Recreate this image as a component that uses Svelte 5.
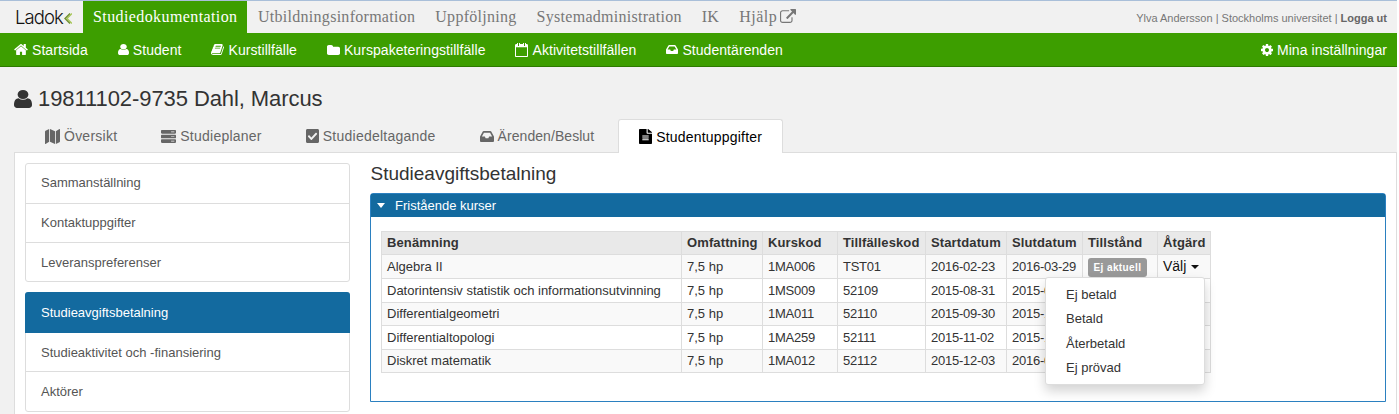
<script>
  const top = ['Utbildningsinformation', 'Uppföljning', 'Systemadministration', 'IK'];
  const bar = (y) => `M480 ${y + 128}H32c-17.673 0-32-14.327-32-32v-64c0-17.673 14.327-32 32-32h448c17.673 0 32 14.327 32 32v64c0 17.673-14.327 32-32 32zM344 ${y + 52}v24h112v-24z`;
  const icons = {
    home: ['64 256 1664 1280', 'M1472 992v480q0 26-19 45t-45 19h-384v-384h-256v384h-384q-26 0-45-19t-19-45v-480q0-1 .5-3t.5-3l575-474 575 474q1 2 1 6zm223-69l-62 74q-8 9-21 11h-3q-13 0-21-7l-692-577-692 577q-12 8-24 7-13-2-21-11l-62-74q-8-10-7-23.5t11-21.5l719-599q32-26 76-26t76 26l244 204v-195q0-14 9-23t23-9h192q14 0 23 9t9 23v408l219 182q10 8 11 21.5t-7 23.5z'],
    user: ['256 128 1280 1536', 'M1536 1399q0 109-62.5 187t-150.5 78h-854q-88 0-150.5-78t-62.5-187q0-85 8.5-160.5t31.5-151.5 58.5-130 94-88.5 134.5-34.5q131 128 313 128t313-128q76 0 134.5 34.5t94 88.5 58.5 130 31.5 151.5 8.5 160.5zm-256-887q0 159-112.5 271.5t-271.5 112.5-271.5-112.5-112.5-271.5 112.5-271.5 271.5-112.5 271.5 112.5 112.5 271.5z'],
    book: ['0 128 1664 1536', 'M1639 478q40 57 18 129l-275 906q-19 64-76.5 107.5t-122.5 43.5h-923q-77 0-148.5-53.5t-99.5-131.5q-24-67-2-127 0-4 3-27t4-37q1-8-3-21.5t-3-19.5q2-11 8-21t16.5-23.5 16.5-23.5q23-38 45-91.5t30-91.5q3-10 .5-30t-.5-28q3-11 17-28t17-23q21-36 42-92t25-90q1-9-2.5-32t.5-28q4-13 22-30.5t22-22.5q19-26 42.5-84.5t27.5-96.5q1-8-3-25.5t-2-26.5q2-8 9-18t18-23 17-21q8-12 16.5-30.5t15-35 16-36 19.5-32 26.5-23.5 36-11.5 47.5 5.5l-1 3q38-9 51-9h761q74 0 114 56t18 130l-274 906q-36 119-71.5 153.5t-128.5 34.5h-869q-27 0-38 15-11 16-1 43 24 70 144 70h923q29 0 56-15.5t35-41.5l300-987q7-22 5-57 38 15 59 43zm-1064 2q-4 13 2 22.5t20 9.5h608q13 0 25.5-9.5t16.5-22.5l21-64q4-13-2-22.5t-20-9.5h-608q-13 0-25.5 9.5t-16.5 22.5zm-83 256q-4 13 2 22.5t20 9.5h608q13 0 25.5-9.5t16.5-22.5l21-64q4-13-2-22.5t-20-9.5h-608q-13 0-25.5 9.5t-16.5 22.5z'],
    folder: ['64 128 1664 1408', 'M1728 608v704q0 92-66 158t-158 66h-1216q-92 0-158-66t-66-158v-960q0-92 66-158t158-66h320q92 0 158 66t66 158v32h672q92 0 158 66t66 158z'],
    calendar: ['64 128 1664 1664', 'M192 1664h1408v-1024h-1408v1024zm384-1216v-288q0-14-9-23t-23-9h-64q-14 0-23 9t-9 23v288q0 14 9 23t23 9h64q14 0 23-9t9-23zm768 0v-288q0-14-9-23t-23-9h-64q-14 0-23 9t-9 23v288q0 14 9 23t23 9h64q14 0 23-9t9-23zm384-64v1280q0 52-38 90t-90 38h-1408q-52 0-90-38t-38-90v-1280q0-52 38-90t90-38h128v-96q0-66 47-113t113-47h64q66 0 113 47t47 113v96h384v-96q0-66 47-113t113-47h64q66 0 113 47t47 113v96h128q52 0 90 38t38 90z'],
    inbox: ['0 64 576 384', 'M567.938 243.908L462.25 85.374A48.003 48.003 0 0 0 422.311 64H153.689a48 48 0 0 0-39.938 21.374L8.062 243.908A47.994 47.994 0 0 0 0 270.533V400c0 26.51 21.49 48 48 48h480c26.51 0 48-21.49 48-48V270.533a47.994 47.994 0 0 0-8.062-26.625zM162.252 128h251.497l85.333 128H376l-32 64H232l-32-64H76.918l85.334-128z'],
    cog: ['128 128 1536 1536', 'M1152 896q0-106-75-181t-181-75-181 75-75 181 75 181 181 75 181-75 75-181zm512-109v222q0 12-8 23t-20 13l-185 28q-19 54-39 91 35 50 107 138 10 12 10 25t-9 23q-27 37-99 108t-94 71q-12 0-26-9l-138-108q-44 23-91 38-16 136-29 186-7 28-36 28h-222q-14 0-24.5-8.5t-11.5-21.5l-28-184q-49-16-90-37l-141 107q-10 9-25 9-14 0-25-11-126-114-165-168-7-10-7-23 0-12 8-23 15-21 51-66.5t54-70.5q-27-50-41-99l-183-27q-13-2-21-12.5t-8-23.5v-222q0-12 8-23t19-13l186-28q14-46 39-92-40-57-107-138-10-12-10-24 0-10 9-23 26-36 98.5-107.5t94.5-71.5q13 0 26 10l138 107q44-23 91-38 16-136 29-186 7-28 36-28h222q14 0 24.5 8.5t11.5 21.5l28 184q49 16 90 37l142-107q9-9 24-9 13 0 25 10 129 119 165 170 7 8 7 22 0 12-8 23-15 21-51 66.5t-54 70.5q26 50 41 98l183 28q13 2 21 12.5t8 23.5z'],
    map: ['0 32 576 448', 'M0 117.66v346.32c0 11.32 11.43 19.06 21.94 14.86L160 416V32L20.12 87.95A32.006 32.006 0 0 0 0 117.66zM192 416l192 64V96L192 32v384zM554.06 33.16L416 96v384l139.88-55.95A31.996 31.996 0 0 0 576 394.34V48.02c0-11.32-11.43-19.06-21.94-14.86z'],
    server: ['0 32 512 448', bar(32) + bar(192) + bar(352)],
    check: ['0 32 448 448', 'M400 480H48c-26.51 0-48-21.49-48-48V80c0-26.51 21.49-48 48-48h352c26.51 0 48 21.49 48 48v352c0 26.51-21.49 48-48 48zm-204.686-98.059l184-184c6.248-6.248 6.248-16.379 0-22.627l-22.627-22.627c-6.248-6.248-16.379-6.249-22.628 0L184 302.745l-69.059-69.059c-6.248-6.248-16.379-6.248-22.628 0L69.686 256.314c-6.248 6.248-6.248 16.379 0 22.627l104 104c6.249 6.25 16.379 6.25 22.628.001z'],
    file: ['0 0 384 512', 'M224 136V0H24C10.7 0 0 10.7 0 24v464c0 13.3 10.7 24 24 24h336c13.3 0 24-10.7 24-24V160H248c-13.2 0-24-10.8-24-24zm64 236c0 6.6-5.4 12-12 12H108c-6.6 0-12-5.4-12-12v-8c0-6.6 5.4-12 12-12h168c6.6 0 12 5.4 12 12v8zm0-64c0 6.6-5.4 12-12 12H108c-6.6 0-12-5.4-12-12v-8c0-6.6 5.4-12 12-12h168c6.6 0 12 5.4 12 12v8zm0-72v8c0 6.6-5.4 12-12 12H108c-6.6 0-12-5.4-12-12v-8c0-6.6 5.4-12 12-12h168c6.6 0 12 5.4 12 12zm96-114.1v6.1H256V0h6.1c6.4 0 12.5 2.5 17 7l97.9 98c4.5 4.5 7 10.6 7 16.9z'],
    ext: ['0 0 1792 1536', 'M1408 928v320q0 119-84.5 203.5t-203.5 84.5h-832q-119 0-203.5-84.5t-84.5-203.5v-832q0-119 84.5-203.5t203.5-84.5h704q14 0 23 9t9 23v64q0 14-9 23t-23 9h-704q-66 0-113 47t-47 113v832q0 66 47 113t113 47h832q66 0 113-47t47-113v-320q0-14 9-23t23-9h64q14 0 23 9t9 23zm384-864v512q0 26-19 45t-45 19-45-19l-176-176-652 652q-10 10-23 10t-23-10l-114-114q-10-10-10-23t10-23l652-652-176-176q-19-19-19-45t19-45 45-19h512q26 0 45 19t19 45z']
  };
  const nav = [
    ['home', 'Startsida'], ['user', 'Student'], ['book', 'Kurstillfälle'],
    ['folder', 'Kurspaketeringstillfälle'], ['calendar', 'Aktivitetstillfällen'], ['inbox', 'Studentärenden']
  ];
  const tabs = [['map', 'Översikt'], ['server', 'Studieplaner'], ['check', 'Studiedeltagande'], ['inbox', 'Ärenden/Beslut'], ['file', 'Studentuppgifter']];
  const side1 = ['Sammanställning', 'Kontaktuppgifter', 'Leveranspreferenser'];
  const side2 = ['Studieaktivitet och -finansiering', 'Aktörer'];
  const cols = ['Benämning', 'Omfattning', 'Kurskod', 'Tillfälleskod', 'Startdatum', 'Slutdatum', 'Tillstånd', 'Åtgärd'];
  const rows = [
    ['Algebra II', '1MA006', 'TST01', '2016-02-23', '2016-03-29'],
    ['Datorintensiv statistik och informationsutvinning', '1MS009', '52109', '2015-08-31', '2015-09-29'],
    ['Differentialgeometri', '1MA011', '52110', '2015-09-30', '2015-11-01'],
    ['Differentialtopologi', '1MA259', '52111', '2015-11-02', '2015-12-02'],
    ['Diskret matematik', '1MA012', '52112', '2015-12-03', '2016-01-17']
  ];
  const menu = ['Ej betald', 'Betald', 'Återbetald', 'Ej prövad'];
</script>

{#snippet icon(name, cls)}
  <svg class="ic {cls} {cls}-{name}" viewBox={icons[name][0]} preserveAspectRatio="none" aria-hidden="true"><path d={icons[name][1]} /></svg>
{/snippet}

<div class="page">
  <header class="top">
    <div class="logo"><span class="logotext">Ladok</span><svg class="chev" viewBox="0 0 8 11"><path class="c2" d="M8 .5 3 5.5l5 5" /><path class="c1" d="M6 .5 1 5.5l5 5" /></svg></div>
    <a class="topitem active">Studiedokumentation</a>
    {#each top as t}<a class="topitem">{t}</a>{/each}
    <a class="topitem help">Hjälp{@render icon('ext', 'extic')}</a>
    <div class="user">Ylva Andersson | Stockholms universitet | <b>Logga ut</b></div>
  </header>

  <nav class="green">
    {#each nav as [ic, label]}
      <a class="navitem">{@render icon(ic, 'navic')}{label}</a>
    {/each}
    <a class="navitem settings">{@render icon('cog', 'navic')}Mina inställningar</a>
  </nav>

  <h1 class="person">{@render icon('user', 'personic')}19811102-9735 Dahl, Marcus</h1>

  <div class="tabs">
    {#each tabs as [ic, label], i}
      <a class="tab" class:on={i === 4}>{@render icon(ic, 'tabic')}{label}</a>
    {/each}
  </div>

  <div class="content">
    <aside class="side">
      <div class="group">
        {#each side1 as s}<a class="li">{s}</a>{/each}
      </div>
      <div class="group second">
        <a class="li current">Studieavgiftsbetalning</a>
        {#each side2 as s}<a class="li">{s}</a>{/each}
      </div>
    </aside>

    <main class="main">
      <h2 class="title">Studieavgiftsbetalning</h2>
      <section class="panel">
        <div class="phead"><span class="pcaret"></span>Fristående kurser</div>
        <div class="pbody">
          <table>
            <thead><tr>{#each cols as c}<th>{c}</th>{/each}</tr></thead>
            <tbody>
              {#each rows as r, i}
                <tr class:odd={i % 2 === 0} class:short={i === 2 || i === 4}>
                  <td>{r[0]}</td><td>7,5 hp</td><td class="num">{r[1]}</td><td class="num">{r[2]}</td><td class="num">{r[3]}</td><td class="num">{r[4]}</td>
                  <td>{#if i === 0}<span class="badge">Ej aktuell</span>{/if}</td>
                  <td class="act">{#if i === 0}Välj <span class="caret"></span>{/if}</td>
                </tr>
              {/each}
            </tbody>
          </table>
          <ul class="menu">
            {#each menu as m}<li>{m}</li>{/each}
          </ul>
        </div>
      </section>
    </main>
  </div>
</div>

<style>
  :global(body) { margin: 0; background: #fff; }
  .page {
    width: 1397px; height: 414px; overflow: hidden; background: #f1f1f1;
    font-family: "Liberation Sans", Arial, sans-serif; color: #333; font-size: 13px;
    border-top: 1px solid #a9bfd9; box-sizing: border-box;
  }
  .ic { fill: currentColor; display: block; flex: none; }

  .top { display: flex; height: 32px; align-items: stretch; }
  .logo { width: 83px; flex: none; display: flex; align-items: center; padding-left: 15px; box-sizing: border-box; }
  .logotext { font-family: Inter, sans-serif; font-weight: 300; font-size: 18.5px; letter-spacing: -0.9px; color: #111; line-height: 1; margin-top: 1px; }
  .chev { width: 8px; height: 11px; fill: none; stroke-width: 1.4; margin-left: 1px; margin-top: 3px; }
  .c1 { stroke: #6f8f2f; }
  .c2 { stroke: #a9c85a; }
  .topitem {
    font-family: "Liberation Serif", serif; font-size: 16px; color: #777; padding: 0 10px;
    display: flex; align-items: center; letter-spacing: 0.28px;
  }
  .topitem.active { background: #3d9e00; color: #fff; width: 164px; box-sizing: border-box; padding: 0 0 0 10px; margin-right: 1px; letter-spacing: 0.4px; }
  .topitem.help { letter-spacing: 0.5px; }
  .extic { width: 16px; height: 14px; margin-left: 3px; margin-top: -3px; }
  .user { margin-left: auto; padding: 1px 10px 0 0; font-size: 11px; color: #777; display: flex; align-items: center; white-space: pre; }
  .user b { color: #666; }

  .green {
    display: flex; height: 34px; box-sizing: border-box; background: #3d9e00;
    border-bottom: 1px solid #2d7a00; padding-left: 14px; gap: 30px; align-items: center;
  }
  .navitem { color: #fff; font-size: 14px; display: flex; align-items: center; gap: 4px; letter-spacing: 0.06px; }
  .navic-home { width: 14px; height: 11px; }
  .navic-user { width: 11px; height: 11px; }
  .navic-book { width: 13px; height: 11px; }
  .navic-folder { width: 13px; height: 10px; }
  .navic-calendar { width: 13px; height: 14px; }
  .navic-inbox { width: 12px; height: 9px; }
  .navic-cog { width: 12px; height: 12px; }
  .settings { margin-left: auto; margin-right: 10px; }

  .person { margin: 0; font-weight: 400; font-size: 22px; line-height: 26px; display: flex; align-items: center; padding: 19px 0 0 14px; color: #333; letter-spacing: -0.08px; }
  .personic { width: 18px; height: 18px; margin-right: 6px; }

  .tabs { display: flex; gap: 2px; padding-left: 24px; margin-top: 7px; height: 33px; }
  .tab {
    display: flex; align-items: center; gap: 4px; padding: 0 20px; font-size: 14px; color: #666; letter-spacing: 0.24px;
    border: 1px solid transparent; border-bottom: 0; border-radius: 3px 3px 0 0; box-sizing: border-box;
  }
  .tab:nth-child(4) { letter-spacing: 0.06px; }
  .tab.on { background: #fff; color: #000; border-color: #ddd; position: relative; z-index: 1; height: 34px; margin-left: 1px; letter-spacing: 0.2px; }
  .tabic-map { width: 15px; height: 15px; }
  .tabic-server { width: 15px; height: 13px; }
  .tabic-check { width: 13px; height: 14px; }
  .tabic-inbox { width: 14px; height: 11px; }
  .tabic-file { width: 13px; height: 15px; }

  .content { display: flex; background: #fff; border: 1px solid #ddd; margin-left: 14px; height: 270px; box-sizing: border-box; padding: 10px 10px 0; gap: 20px; }
  .side { width: 325px; flex: none; display: flex; flex-direction: column; gap: 10px; }
  .group { border: 1px solid #ddd; border-radius: 3px; display: flex; flex-direction: column; }
  .li { box-sizing: border-box; height: 39.5px; line-height: 38px; padding-left: 15px; border-bottom: 1px solid #ddd; font-size: 13px; color: #555; }
  .li:last-child { border-bottom: 0; height: 38px; line-height: 40px; }
  .li.current { background: #136a9f; color: #fff; margin: -1px -1px 0; height: 41px; line-height: 42px; padding-left: 16px; border: 0; border-radius: 3px 3px 0 0; }
  .second .li { height: 39px; line-height: 40px; }
  .second .li:last-child { height: 39px; line-height: 39px; }
  .second .li.current { height: 41px; line-height: 42px; }

  .main { flex: 1; min-width: 0; }
  .title { margin: 0; font-weight: 400; font-size: 19px; line-height: 20px; color: #333; padding: 1px 0 0 .5px; }
  .panel { margin-top: 9px; border: 1px solid #2b80c0; border-radius: 3px 3px 0 0; height: 209px; box-sizing: border-box; }
  .phead { background: #136a9f; color: #fff; height: 23px; font-size: 13px; padding-left: 6px; display: flex; align-items: center; }
  .pcaret { border: 4px solid transparent; border-top: 5px solid #fff; border-bottom: 0; margin-right: 10px; }
  .pbody { position: relative; padding: 14px 10px; }
  table { border-collapse: collapse; font-size: 13px; color: #333; width: 829px; table-layout: fixed; }
  th { background: #e9e9e9; text-align: left; font-weight: 700; height: 23px; letter-spacing: .12px; }
  th, td { border: 1px solid #ddd; padding: 0 5px 1px; white-space: nowrap; box-sizing: border-box; }
  th:nth-child(1) { width: 300px; }
  th:nth-child(2) { width: 81px; }
  th:nth-child(3) { width: 75px; }
  th:nth-child(4) { width: 88px; }
  th:nth-child(5) { width: 81px; }
  th:nth-child(6) { width: 76px; }
  th:nth-child(7) { width: 75px; }
  th:nth-child(8) { width: 53px; }
  td { height: 24px; }
  .short td { height: 23px; }
  .num { letter-spacing: -.25px; }
  tr.odd td { background: #f9f9f9; }
  .badge { display: inline-block; background: #999; color: #fff; font-size: 10px; font-weight: 700; padding: 0 5.5px; height: 19px; line-height: 19px; border-radius: 3px; letter-spacing: .4px; vertical-align: top; margin-top: 3px; }
  .act { color: #111; font-size: 14px; }
  .caret { display: inline-block; border: 4px solid transparent; border-top: 4px solid #111; border-bottom: 0; vertical-align: middle; margin-left: 1px; }
  .menu {
    position: absolute; left: 674px; top: 60px; width: 160px; height: 108px; box-sizing: border-box; margin: 0;
    list-style: none; padding: 5px 0 0; background: #fff; border: 1px solid #ddd; border-radius: 3px;
    box-shadow: 0 6px 12px rgba(0,0,0,.175); font-size: 13px; color: #333;
  }
  .menu li { height: 24.4px; line-height: 24px; padding-left: 20px; }
</style>
